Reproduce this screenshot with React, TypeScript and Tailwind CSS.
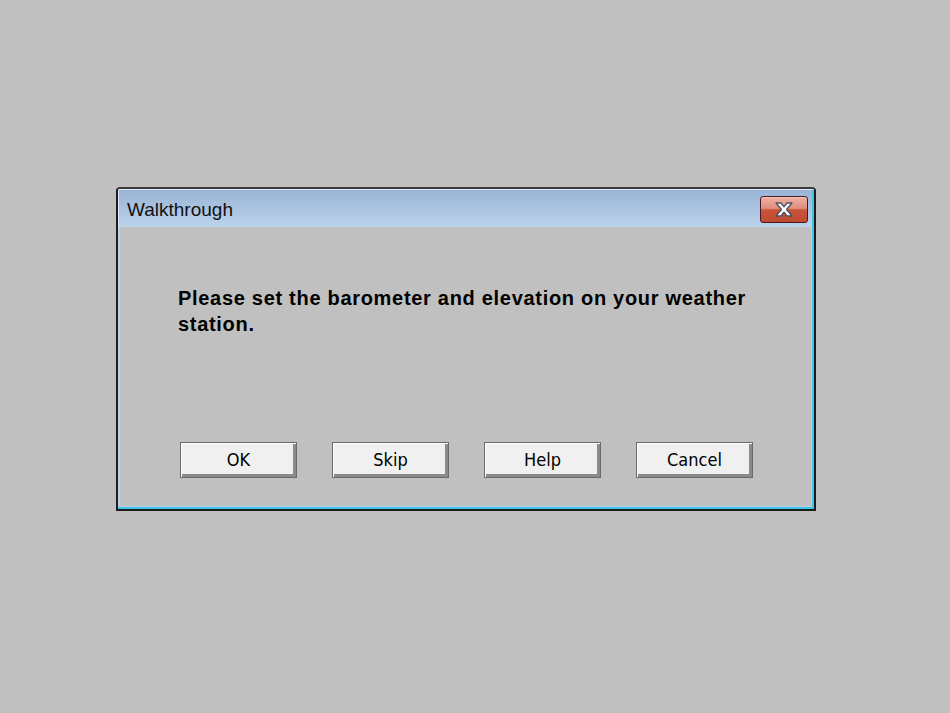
import React from "react";

function CloseIcon() {
  return (
    <svg width="22" height="17" viewBox="0 0 22 17">
      <path
        d="M3 2 L8 2 L11 5.8 L14 2 L19 2 L13.5 8.5 L19 15 L14 15 L11 11.2 L8 15 L3 15 L8.5 8.5 Z"
        fill="#ffffff"
        stroke="#505064"
        strokeWidth="1.3"
        strokeLinejoin="round"
      />
    </svg>
  );
}

function Btn({ label }: { label: string }) {
  return (
    <button className="w-[117px] h-[36px] bg-[#f0f0f0] border border-[#6a6a6a] shadow-[inset_1px_1px_0_#ffffff,inset_-3px_-3px_0_#8a8a8a] text-[18px] text-black flex items-center justify-center pb-[2px] [font-family:'DejaVu_Sans_Condensed','Liberation_Sans',sans-serif] [font-stretch:condensed]">
      {label}
    </button>
  );
}

export default function App() {
  return (
    <div className="w-[950px] h-[713px] bg-[#c0c0c0] pt-[187px] pl-[116px] [font-family:'Liberation_Sans',Arial,sans-serif]">
      <div className="w-[700px] border-2 border-[#1c1c1c] border-t-[#3a3a3a] rounded-t-[4px] overflow-hidden">
        <div className="h-[38px] bg-gradient-to-b from-[#98b3d4] to-[#bcd3ec] flex items-center justify-between pl-[9px] pr-[5px] shadow-[inset_1px_1px_0_#dde9f6,inset_-2px_0_0_#40c4e6]">
          <span className="text-[19px] text-[#111] mt-[4px]">Walkthrough</span>
          <div className="w-[48px] h-[27px] mt-[2px] mr-[1px] rounded-[3px] border border-[#4a1820] bg-[linear-gradient(to_bottom,#eeb0a2_0%,#e08e7c_45%,#c8533a_52%,#c04a30_100%)] flex items-center justify-center shadow-[inset_0_1px_0_#f6c8bc]">
            <CloseIcon />
          </div>
        </div>
        <div className="bg-[#b8d0ea] pl-[2px] pr-[3px] pb-[3px] shadow-[inset_-1px_-1px_0_#3ec4e6,inset_-2px_-2px_0_#3ec4e6]">
          <div className="h-[279px] bg-[#c0c0c0] pl-[58px] pt-[58px]">
            <p className="text-[20px] font-bold leading-[26px] text-black w-[620px] tracking-[0.7px]">
              Please set the barometer and elevation on your weather station.
            </p>
            <div className="mt-[105px] flex gap-[35px] pl-[2px]">
              <Btn label="OK" />
              <Btn label="Skip" />
              <Btn label="Help" />
              <Btn label="Cancel" />
            </div>
          </div>
        </div>
      </div>
    </div>
  );
}
